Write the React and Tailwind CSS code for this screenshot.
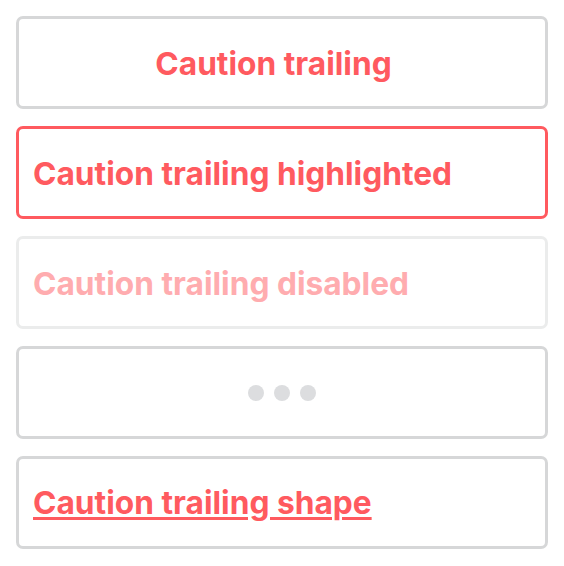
export default function App() {
  const base =
    "h-[93px] w-full rounded-[7px] border-[3px] bg-white flex items-center text-[31.7px] font-bold leading-none";
  return (
    <div
      className="w-[564px] h-[566px] bg-white px-4 pt-4 flex flex-col gap-[17px]"
      style={{ fontFamily: "Inter, 'Liberation Sans', sans-serif" }}
    >
      <div className={`${base} border-[#d6d7d8] text-[#ff5a5f] justify-center pl-[14px] pr-[31px] pt-[3px]`}>
        Caution trailing
      </div>
      <div className={`${base} border-[#ff5a5f] text-[#ff5a5f] px-[14px] pt-[3px]`}>
        Caution trailing highlighted
      </div>
      <div className={`${base} border-[#ebecec] text-[#ffacaf] px-[14px] pt-[3px]`}>
        Caution trailing disabled
      </div>
      <div className={`${base} border-[#d6d7d8] justify-center gap-[10px] px-[14px]`}>
        <span className="w-4 h-4 rounded-full bg-[#dcdddf]" />
        <span className="w-4 h-4 rounded-full bg-[#dcdddf]" />
        <span className="w-4 h-4 rounded-full bg-[#dcdddf]" />
      </div>
      <div className={`${base} border-[#d6d7d8] text-[#ff5a5f] px-[14px]`}>
        <span className="underline decoration-[3px] underline-offset-[3px]">
          Caution trailing shape
        </span>
      </div>
    </div>
  );
}
